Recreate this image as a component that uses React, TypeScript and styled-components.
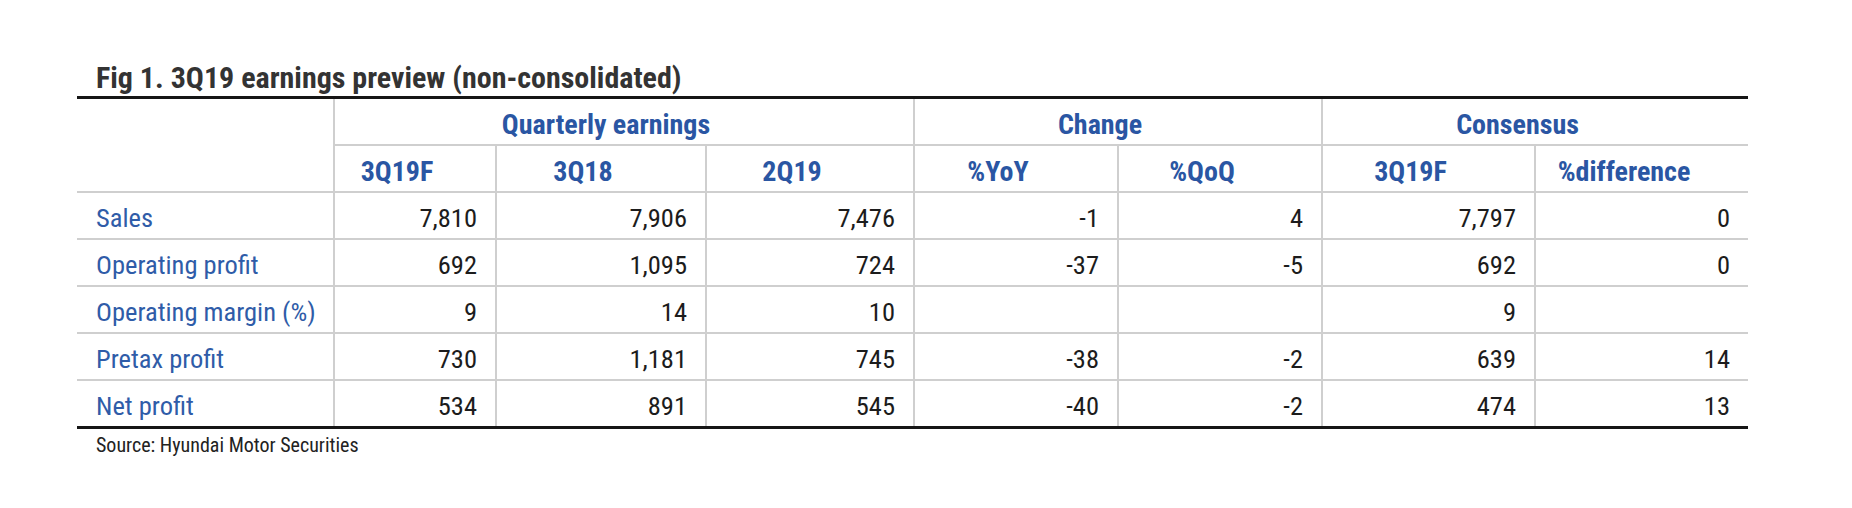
import { Fragment } from 'react';
import styled, { createGlobalStyle, css } from 'styled-components';

const GlobalStyle = createGlobalStyle`
    html, body {
        margin: 0;
        padding: 0;
        background: #ffffff;
    }
`;

const FONT = `'Roboto Condensed', 'Liberation Sans Narrow', Roboto, sans-serif`;
const BLUE = '#2a56a3';
const GRID = '2px solid #cfcfcf';

const Page = styled.div`
    width: 1852px;
    height: 508px;
    box-sizing: border-box;
    padding: 60px 0 0 77px;
    font-family: ${FONT};
    font-stretch: condensed;
`;

const Figure = styled.div`
    width: 1671px;
`;

const Title = styled.h1`
    margin: 0;
    padding-left: 19px;
    font-size: 30px;
    line-height: 36px;
    font-weight: 700;
    color: #333333;
`;

const Table = styled.table`
    width: 1671px;
    table-layout: fixed;
    border-collapse: separate;
    border-spacing: 0;
    border-top: 3px solid #161616;
    border-bottom: 3px solid #161616;
`;

const Cell = styled.td<{ $last?: boolean; $lastRow?: boolean }>`
    padding: 5px 18px 0 0;
    line-height: 40px;
    font-size: 26.5px;
    color: #1c1c1c;
    text-align: right;
    white-space: nowrap;
    border-right: ${({ $last }) => ($last ? 'none' : GRID)};
    border-bottom: ${({ $lastRow }) => ($lastRow ? 'none' : GRID)};
`;

const LabelCell = styled(Cell)`
    padding-left: 19px;
    text-align: left;
    color: #2f5ca8;
`;

const HeadCell = styled.th<{ $last?: boolean; $blank?: boolean }>`
    padding: 7px 36px 0 0;
    line-height: 38px;
    font-size: 28px;
    font-weight: 700;
    color: ${BLUE};
    text-align: center;
    white-space: nowrap;
    border-right: ${({ $last }) => ($last ? 'none' : GRID)};
    border-bottom: ${GRID};

    ${({ $blank }) =>
        $blank &&
        css`
            padding: 0;
        `}
`;

const Source = styled.p`
    margin: 3px 0 0;
    padding-left: 19px;
    font-size: 20px;
    line-height: 26px;
    color: #222222;
`;

const columnWidths = [258, 162, 210, 208, 204, 204, 213, 212];

const groups = [
    { label: 'Quarterly earnings', span: 3 },
    { label: 'Change', span: 2 },
    { label: 'Consensus', span: 2 },
];

const subHeaders = ['3Q19F', '3Q18', '2Q19', '%YoY', '%QoQ', '3Q19F', '%difference'];

const rows: { label: string; values: string[] }[] = [
    { label: 'Sales', values: ['7,810', '7,906', '7,476', '-1', '4', '7,797', '0'] },
    { label: 'Operating profit', values: ['692', '1,095', '724', '-37', '-5', '692', '0'] },
    { label: 'Operating margin (%)', values: ['9', '14', '10', '', '', '9', ''] },
    { label: 'Pretax profit', values: ['730', '1,181', '745', '-38', '-2', '639', '14'] },
    { label: 'Net profit', values: ['534', '891', '545', '-40', '-2', '474', '13'] },
];

const EarningsTable = () => (
    <Table>
        <colgroup>
            {columnWidths.map((width, index) => (
                <col key={index} style={{ width }} />
            ))}
        </colgroup>
        <thead>
            <tr>
                <HeadCell $blank rowSpan={2} />
                {groups.map((group, index) => (
                    <HeadCell
                        key={group.label}
                        colSpan={group.span}
                        $last={index === groups.length - 1}
                    >
                        {group.label}
                    </HeadCell>
                ))}
            </tr>
            <tr>
                {subHeaders.map((header, index) => (
                    <HeadCell key={index} $last={index === subHeaders.length - 1}>
                        {header}
                    </HeadCell>
                ))}
            </tr>
        </thead>
        <tbody>
            {rows.map((row, rowIndex) => {
                const lastRow = rowIndex === rows.length - 1;

                return (
                    <tr key={row.label}>
                        <LabelCell $lastRow={lastRow}>{row.label}</LabelCell>
                        {row.values.map((value, index) => (
                            <Fragment key={index}>
                                <Cell
                                    $lastRow={lastRow}
                                    $last={index === row.values.length - 1}
                                >
                                    {value}
                                </Cell>
                            </Fragment>
                        ))}
                    </tr>
                );
            })}
        </tbody>
    </Table>
);

export default function App() {
    return (
        <>
            <GlobalStyle />
            <Page>
                <Figure>
                    <Title>Fig 1. 3Q19 earnings preview (non-consolidated)</Title>
                    <EarningsTable />
                    <Source>Source: Hyundai Motor Securities</Source>
                </Figure>
            </Page>
        </>
    );
}
